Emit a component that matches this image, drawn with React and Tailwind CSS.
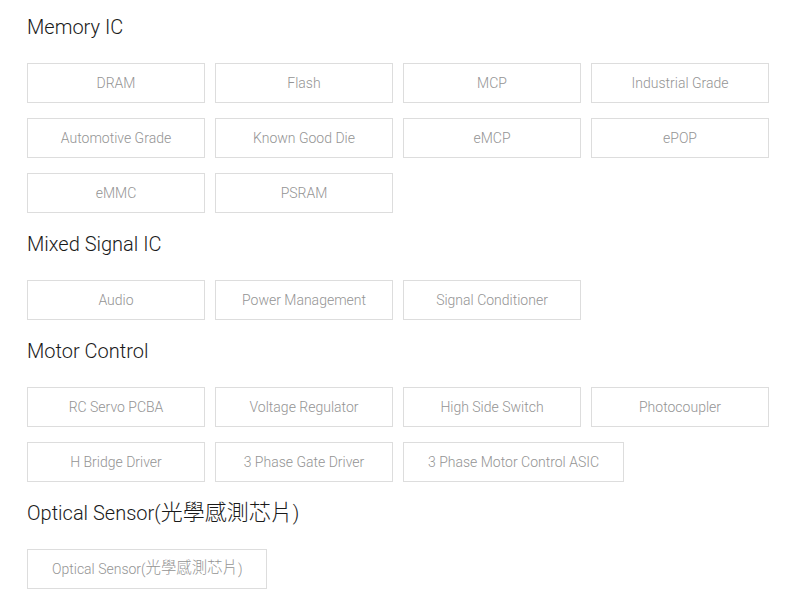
import React from "react";

// CJK glyphs sit a bit larger than the Latin text around them
const Label = ({ text }) => {
  const parts = text.split(/([\u3400-\u9fff]+)/);
  return (
    <>
      {parts.map((part, i) =>
        /[\u3400-\u9fff]/.test(part) ? (
          <span key={i} className="text-[1.1em] leading-none">
            {part}
          </span>
        ) : (
          <React.Fragment key={i}>{part}</React.Fragment>
        )
      )}
    </>
  );
};

const sections = [
  {
    title: "Memory IC",
    items: ["DRAM", "Flash", "MCP", "Industrial Grade", "Automotive Grade", "Known Good Die", "eMCP", "ePOP", "eMMC", "PSRAM"],
  },
  {
    title: "Mixed Signal IC",
    items: ["Audio", "Power Management", "Signal Conditioner"],
  },
  {
    title: "Motor Control",
    items: ["RC Servo PCBA", "Voltage Regulator", "High Side Switch", "Photocoupler", "H Bridge Driver", "3 Phase Gate Driver", "3 Phase Motor Control ASIC"],
  },
  {
    title: "Optical Sensor(光學感測芯片)",
    items: ["Optical Sensor(光學感測芯片)"],
  },
];

const App = () => {
  return (
    <div
      className="min-h-screen bg-white px-[27px] pt-[12px]"
      style={{ fontFamily: "Roboto, 'Noto Sans CJK TC', sans-serif" }}
    >
      {sections.map((section) => (
        <div key={section.title} className="mb-[16px]">
          <h2 className="h-[30px] text-[20px] leading-[30px] text-[#1a1a1a] font-light mb-[21px] whitespace-nowrap">
            <Label text={section.title} />
          </h2>
          <div className="flex flex-wrap gap-x-[10px] gap-y-[15px] w-[742px]">
            {section.items.map((item) => (
              <div
                key={item}
                className="h-[40px] min-w-[178px] px-6 flex items-center justify-center border border-[#dddddd] text-[14px] text-[#949494] font-light cursor-pointer whitespace-nowrap"
              >
                <Label text={item} />
              </div>
            ))}
          </div>
        </div>
      ))}
    </div>
  );
};

export default App;
